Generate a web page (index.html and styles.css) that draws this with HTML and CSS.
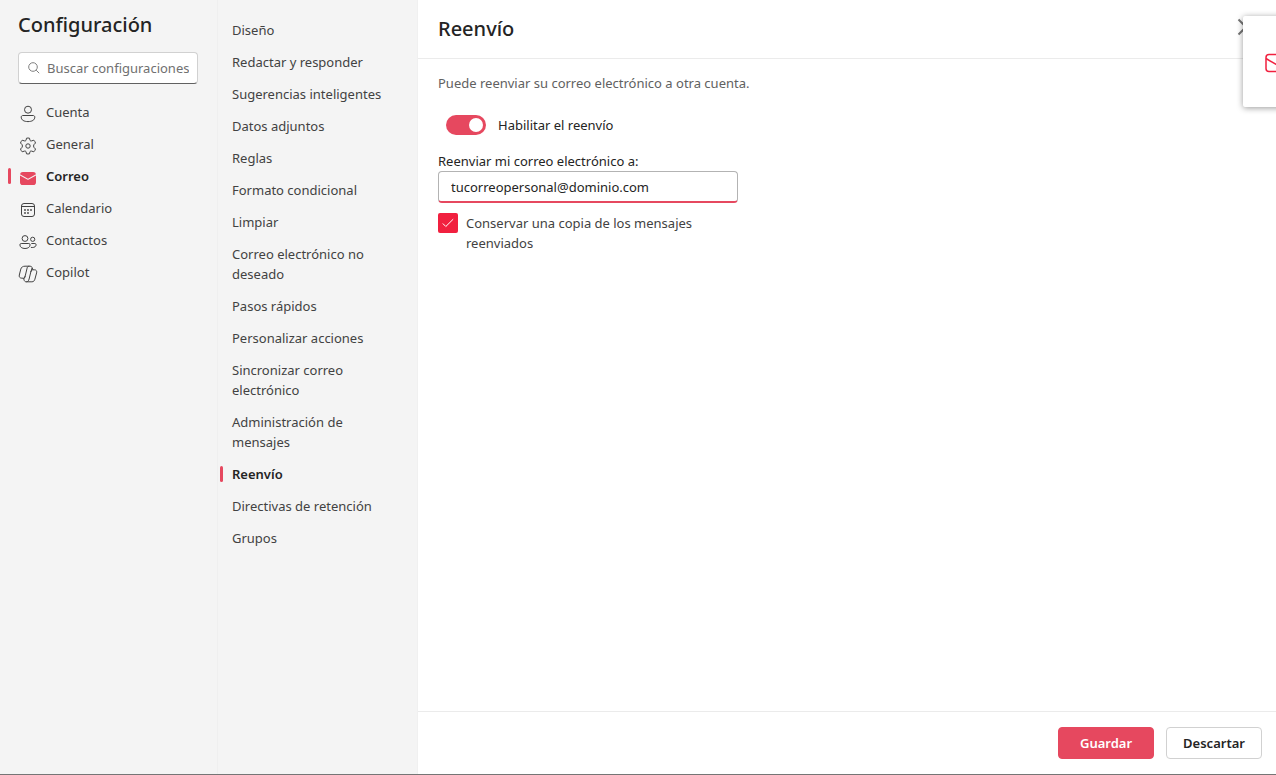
FILE: index.html
```html
<!DOCTYPE html>
<html lang="es">
<head>
<meta charset="utf-8">
<title>Configuración</title>
<link rel="stylesheet" href="styles.css">
</head>
<body>
<div class="settings">
  <aside class="sidebar">
    <h1 class="title">Configuración</h1>
    <div class="search">
      <svg class="search-icon" viewBox="0 0 12 12" aria-hidden="true"><circle cx="5" cy="5" r="4.3"/><path d="M8.2 8.2l3 3"/></svg>
      <input class="search-input" type="text" placeholder="Buscar configuraciones" aria-label="Buscar configuraciones">
    </div>
    <nav class="sections" aria-label="Secciones">
      <a class="section" href="#cuenta">
        <svg class="icon" viewBox="0 0 20 20" aria-hidden="true"><circle cx="10" cy="5.700" r="3.500"/><path d="M4.800 11.500h10.400c.9 0 1.600.7 1.600 1.600 0 3-2.900 4.500-6.800 4.500s-6.800-1.500-6.800-4.500c0-.9.7-1.600 1.600-1.600z"/></svg>
        Cuenta</a>
      <a class="section" href="#general">
        <svg class="icon" viewBox="0 0 20 20" aria-hidden="true"><circle cx="10" cy="10" r="2.200"/><path d="M8.500 2.200Q10 1.800 11.500 2.200L12 4.400Q12.600 5.200 13.600 4.900L15.800 4.200Q17 5.400 17.500 7L15.900 8.700Q15.200 10 15.900 11.300L17.500 13Q17 14.600 15.800 15.800L13.600 15.100Q12.600 14.800 12 15.600L11.500 17.800Q10 18.200 8.500 17.800L8 15.600Q7.400 14.800 6.400 15.100L4.200 15.800Q3 14.600 2.500 13L4.100 11.300Q4.800 10 4.100 8.700L2.500 7Q3 5.400 4.200 4.200L6.400 4.900Q7.400 5.200 8 4.400z"/></svg>
        General</a>
      <a class="section section-active" href="#correo" aria-current="page">
        <svg class="icon icon-mail" viewBox="0 0 20 20" aria-hidden="true"><path class="mail-fill" d="M2 7.400l7.700 4.300q.3.200.6 0L18 7.400v6.800A2.800 2.800 0 0 1 15.200 17H4.800A2.800 2.800 0 0 1 2 14.200zM4.800 4h10.400A2.800 2.800 0 0 1 18 6.300l-8 4.400-8-4.400A2.800 2.800 0 0 1 4.800 4z"/></svg>
        Correo</a>
      <a class="section" href="#calendario">
        <svg class="icon" viewBox="0 0 20 20" aria-hidden="true"><rect x="3.500" y="3.500" width="13" height="13" rx="2.500"/><path d="M3.500 6.500h13"/><g class="dots"><circle cx="7" cy="10" r=".9"/><circle cx="10" cy="10" r=".9"/><circle cx="13" cy="10" r=".9"/><circle cx="7" cy="13" r=".9"/><circle cx="10" cy="13" r=".9"/></g></svg>
        Calendario</a>
      <a class="section" href="#contactos">
        <svg class="icon" viewBox="0 0 20 20" aria-hidden="true"><circle cx="7" cy="6.500" r="2.900"/><circle cx="14.700" cy="7.300" r="2.100"/><path d="M3.200 11.500h7.600c.8 0 1.300.6 1.300 1.300 0 2.200-2 3.700-5.100 3.700s-5.100-1.500-5.100-3.700c0-.7.5-1.300 1.300-1.300zM13.300 11.500h3.600c.7 0 1.200.5 1.200 1.200 0 1.800-1.500 2.800-3.900 2.800-.5 0-.9 0-1.300-.1"/></svg>
        Contactos</a>
      <a class="section" href="#copilot">
        <svg class="icon" viewBox="0 0 20 20" aria-hidden="true"><path d="M7 2.200h5.200c1 0 1.600.5 1.900 1.400l.8 2.200h1.500c2 0 2.700 1.500 2.200 3.100l-1.700 6.300c-.5 1.700-1.400 2.600-3 2.600H8.200c-1 0-1.700-.5-2-1.500l-.7-2.100H3.900c-2 0-3.100-1.400-2.600-3.200l1.500-5.900c.5-1.900 2-2.900 4.200-2.900zM11.300 2.200c-1.200 0-1.900.7-2.200 1.900l-1.800 7.500c-.4 1.700-.9 2.600-1.800 2.600M14.900 5.800c-1.200 0-1.700.7-2.100 2.200l-1.700 7c-.5 1.900-1.300 2.800-2.800 2.800M12.800 8l1.300-4M7.300 11.600l-1 3"/></svg>
        Copilot</a>
    </nav>
  </aside>
  <nav class="options" aria-label="Correo">
    <a class="option" href="#o1">Diseño</a>
    <a class="option" href="#o2">Redactar y responder</a>
    <a class="option" href="#o3">Sugerencias inteligentes</a>
    <a class="option" href="#o4">Datos adjuntos</a>
    <a class="option" href="#o5">Reglas</a>
    <a class="option" href="#o6">Formato condicional</a>
    <a class="option" href="#o7">Limpiar</a>
    <a class="option" href="#o8">Correo electrónico no deseado</a>
    <a class="option" href="#o9">Pasos rápidos</a>
    <a class="option" href="#o10">Personalizar acciones</a>
    <a class="option" href="#o11">Sincronizar correo electrónico</a>
    <a class="option" href="#o12">Administración de mensajes</a>
    <a class="option option-active" href="#o13" aria-current="page">Reenvío</a>
    <a class="option" href="#o14">Directivas de retención</a>
    <a class="option" href="#o15">Grupos</a>
  </nav>
  <main class="panel">
    <header class="panel-head">
      <h2 class="panel-title">Reenvío</h2>
      <button class="close" type="button" aria-label="Cerrar"><svg class="close-icon" viewBox="0 0 20 20" aria-hidden="true"><path d="M2.500 2.500l15 15M17.500 2.500l-15 15"/></svg></button>
    </header>
    <form class="panel-body">
      <p class="intro">Puede reenviar su correo electrónico a otra cuenta.</p>
      <label class="toggle"><input class="switch" type="checkbox" role="switch" checked>Habilitar el reenvío</label>
      <label class="field-label" for="address">Reenviar mi correo electrónico a:</label>
      <input class="field" id="address" type="text" value="tucorreopersonal@dominio.com">
      <label class="keep">
        <span class="check"><input class="check-input" type="checkbox" checked><svg class="check-mark" viewBox="0 0 12 12" aria-hidden="true"><path d="M.8 6.500l3 3 7.400-7.300"/></svg></span>
        Conservar una copia de los mensajes reenviados
      </label>
    </form>
    <footer class="actions">
      <button class="button primary" type="button">Guardar</button>
      <button class="button" type="button">Descartar</button>
    </footer>
  </main>
</div>
<div class="notice"><svg class="notice-icon" viewBox="0 0 24 20" aria-hidden="true"><rect x="1" y="1.500" width="22" height="17" rx="3"/><path d="M1 5.500l11 6.500 11-6.500"/></svg></div>
</body>
</html>
```

FILE: styles.css
```css
* { box-sizing: border-box; }

body {
  margin: 0;
  overflow: hidden;
  background: #fff;
  color: #424242;
  font: 13px/20px "Noto Sans", "Open Sans", sans-serif;
}

h1, h2, p { margin: 0; }
a { color: inherit; text-decoration: none; }
input, button { font: inherit; color: inherit; }

.settings {
  display: grid;
  grid-template-columns: 217px 201px 1fr;
  min-height: 100vh;
  border-bottom: 1px solid #757575;
}

.sidebar { padding: 11px 19px 0 18px; background: #f4f4f4; }

.title, .panel-title {
  color: #242424;
  font-size: 20px;
  line-height: 28px;
  font-weight: 500;
}

.search {
  display: flex;
  align-items: center;
  gap: 7px;
  height: 32px;
  margin: 13px 0 12px;
  padding: 0 8px 0 9px;
  border: 1px solid #d1d1d1;
  border-bottom-color: #616161;
  border-radius: 4px;
  background: #fff;
}
.search-icon {
  flex: none;
  width: 12px;
  height: 12px;
  fill: none;
  stroke: #808080;
}
.search-input {
  flex: 1;
  min-width: 0;
  padding: 0;
  border: 0;
  outline: 0;
  background: none;
}
.search-input::placeholder { color: #707070; opacity: 1; }

.sections { margin-left: -10px; }
.section {
  display: flex;
  align-items: center;
  gap: 8px;
  height: 32px;
  padding-left: 10px;
}
.icon {
  flex: none;
  width: 20px;
  height: 20px;
  margin-top: 4px;
  fill: none;
  stroke: #424242;
}
.dots { fill: #424242; stroke: none; }
.mail-fill { fill: #e6485f; stroke: none; }

.section-active, .option-active {
  color: #242424;
  font-weight: 600;
}
.section-active::before, .option-active::before {
  content: "";
  width: 3px;
  height: 16px;
  border-radius: 2px;
  background: #e6485f;
}
.section-active { padding-left: 0; }
.section-active::before { margin-right: -1px; }

.options {
  padding: 14px 32px 14px 2px;
  border-left: 1px solid #efefef;
  border-right: 1px solid #f0f0f0;
  background: #f4f4f4;
}
.option { display: block; padding: 6px 0 6px 12px; }
.option-active {
  display: flex;
  align-items: center;
  gap: 9px;
  padding-left: 0;
}

.panel { display: flex; flex-direction: column; }
.panel-head {
  display: flex;
  align-items: center;
  justify-content: space-between;
  height: 59px;
  padding: 0 20px;
  border-bottom: 1px solid #ebebeb;
}
.close {
  display: flex;
  padding: 0;
  border: 0;
  background: none;
}
.close-icon { width: 20px; height: 20px; margin-bottom: 4px; stroke: #757575; stroke-width: 2; }

.panel-body {
  display: flex;
  flex: 1;
  flex-direction: column;
  align-items: flex-start;
  padding: 14px 20px;
}
.intro { color: #616161; }
.toggle {
  display: flex;
  align-items: center;
  gap: 12px;
  margin: 22px 0 16px 8px;
  color: #242424;
}
.switch {
  display: flex;
  justify-content: flex-end;
  width: 40px;
  height: 20px;
  margin: 0;
  padding: 3px;
  border-radius: 10px;
  background: #e6485f;
  appearance: none;
}
.switch::before {
  content: "";
  width: 14px;
  height: 14px;
  border-radius: 50%;
  background: #fff;
}
.field-label { color: #242424; }
.field {
  width: 300px;
  height: 32px;
  padding: 0 12px;
  border: 1px solid #b3b3b3;
  border-bottom: 2px solid #e6485f;
  border-radius: 4px;
  outline: 0;
  color: #242424;
}
.keep { display: flex; gap: 8px; max-width: 300px; margin-top: 10px; }
.check { display: grid; flex: none; width: 20px; height: 20px; }
.check-input {
  grid-area: 1 / 1;
  width: 20px;
  height: 20px;
  margin: 0;
  border-radius: 2px;
  background: #f1203f;
  appearance: none;
}
.check-mark {
  grid-area: 1 / 1;
  place-self: center;
  width: 12px;
  height: 12px;
  fill: none;
  stroke: #fff;
  pointer-events: none;
}

.actions {
  display: flex;
  justify-content: flex-end;
  gap: 12px;
  padding: 15px 14px;
  border-top: 1px solid #ebebeb;
}
.button {
  width: 96px;
  height: 32px;
  padding: 0;
  border: 1px solid #d1d1d1;
  border-radius: 4px;
  background: #fff;
  color: #242424;
  font-weight: 600;
}
.primary { border-color: #e6485f; background: #e6485f; color: #fff; }

/* Notification card sliding in from the right edge */
.notice {
  position: absolute;
  top: 16px;
  right: -60px;
  display: flex;
  align-items: center;
  width: 93px;
  height: 91px;
  padding: 2px 0 0 22px;
  border-radius: 2px;
  background: #fff;
  box-shadow: 0 1px 6px rgba(0, 0, 0, .4);
}
.notice-icon { width: 24px; height: 20px; fill: none; stroke: #f1203f; stroke-width: 1.5; }
```
